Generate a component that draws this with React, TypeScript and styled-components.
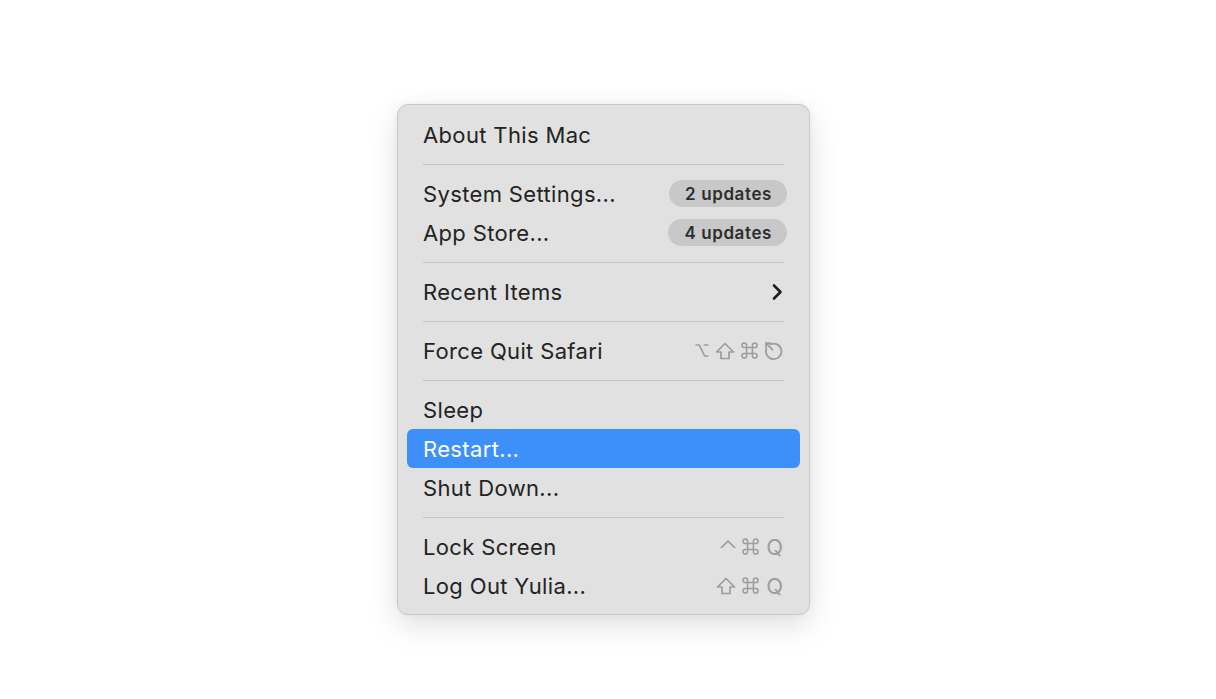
import React from 'react';
import styled, { createGlobalStyle } from 'styled-components';

const GlobalStyle = createGlobalStyle`
  html, body {
    margin: 0;
    padding: 0;
    background: #ffffff;
  }
  body {
    font-family: Inter, "Noto Sans", "Liberation Sans", sans-serif;
    -webkit-font-smoothing: antialiased;
  }
`;

const KEY_GRAY = '#9d9d9d';

const StyledPage = styled.div`
  width: 1216px;
  height: 699px;
  display: flex;
  align-items: flex-start;
  justify-content: flex-start;
  padding: 104px 0 0 397px;
  box-sizing: border-box;
`;

const StyledMenu = styled.div`
  width: 413px;
  box-sizing: border-box;
  padding: 10px 9px 9px 9px;
  background: #e1e1e1;
  border: 1px solid #c9c9c9;
  border-radius: 11px;
  box-shadow: 0 10px 30px rgba(0, 0, 0, 0.13), 0 0 6px rgba(0, 0, 0, 0.05);
  display: flex;
  flex-direction: column;
`;

const StyledRow = styled.div<{ $active?: boolean }>`
  height: 39px;
  display: flex;
  align-items: center;
  justify-content: space-between;
  padding: 0 17px 0 16px;
  border-radius: 6px;
  background: ${(p) => (p.$active ? '#3d8ffa' : 'transparent')};
  color: ${(p) => (p.$active ? '#ffffff' : '#232323')};
`;

const StyledLabel = styled.span`
  font-size: 22px;
  letter-spacing: 0.35px;
`;

const StyledSeparator = styled.div`
  height: 20px;
  display: flex;
  align-items: center;
  padding: 0 16px;

  &::after {
    content: '';
    flex: 1;
    height: 1px;
    background: #c5c5c5;
  }
`;

const StyledBadge = styled.span`
  height: 27px;
  display: flex;
  align-items: center;
  padding: 0 15px 0 16px;
  margin-right: -4px;
  border-radius: 14px;
  background: #c8c8c8;
  color: #2e2e2e;
  font-size: 17px;
  font-weight: 600;
  letter-spacing: 0.6px;
`;

const StyledKeys = styled.span`
  display: flex;
  align-items: center;
  gap: 6px;
  color: ${KEY_GRAY};
`;

const StyledLetter = styled.span`
  font-size: 22px;
  line-height: 1;
  margin-left: 1px;
`;

function OptionKey(): JSX.Element {
  return (
    <svg width="14" height="15" viewBox="0 0 14 15" fill="none" stroke={KEY_GRAY} strokeWidth="1.7">
      <path d="M0.5 2 H4.3 L9.6 13 H13.5 M8.6 2 H13.5" strokeLinejoin="round" />
    </svg>
  );
}

function ShiftKey(): JSX.Element {
  return (
    <svg width="20" height="18" viewBox="0 0 20 18" fill="none" stroke={KEY_GRAY} strokeWidth="1.7">
      <path d="M10 1.5 L18.5 10 H14 V16.5 H6 V10 H1.5 Z" strokeLinejoin="round" />
    </svg>
  );
}

function CommandKey(): JSX.Element {
  return (
    <svg width="17" height="17" viewBox="1.2 1.2 14.6 14.6" fill="none" stroke={KEY_GRAY} strokeWidth="1.3">
      <path d="M6 6 H4 A2 2 0 1 1 6 4 V13 A2 2 0 1 1 4 11 H13 A2 2 0 1 1 11 13 V4 A2 2 0 1 1 13 6 Z" />
    </svg>
  );
}

function ControlKey(): JSX.Element {
  return (
    <svg width="16" height="17" viewBox="0 0 16 17" fill="none" stroke={KEY_GRAY} strokeWidth="1.7">
      <path d="M1 10 L8 3 L15 10" strokeLinejoin="round" />
    </svg>
  );
}

function EscapeKey(): JSX.Element {
  return (
    <svg width="19" height="20" viewBox="0 0 19 20" fill="none" stroke={KEY_GRAY} strokeWidth="1.7">
      <path d="M6.2 3.4 A7.8 7.8 0 1 1 2.4 7.6" strokeLinecap="round" />
      <path d="M2 2.2 L8.6 8.8" strokeLinecap="round" />
      <path d="M2 2.2 V6.6 M2 2.2 H6.4" strokeLinecap="round" />
    </svg>
  );
}

function Chevron(): JSX.Element {
  return (
    <svg width="12" height="18" viewBox="0 0 12 18" fill="none" stroke="#1e1e1e" strokeWidth="2.6">
      <path d="M3 2.5 L9.5 9 L3 15.5" strokeLinecap="round" strokeLinejoin="round" />
    </svg>
  );
}

function App(): JSX.Element {
  return (
    <>
      <GlobalStyle />
      <StyledPage>
        <StyledMenu>
          <StyledRow>
            <StyledLabel>About This Mac</StyledLabel>
          </StyledRow>
          <StyledSeparator />
          <StyledRow>
            <StyledLabel>System Settings...</StyledLabel>
            <StyledBadge>2 updates</StyledBadge>
          </StyledRow>
          <StyledRow>
            <StyledLabel>App Store...</StyledLabel>
            <StyledBadge>4 updates</StyledBadge>
          </StyledRow>
          <StyledSeparator />
          <StyledRow>
            <StyledLabel>Recent Items</StyledLabel>
            <Chevron />
          </StyledRow>
          <StyledSeparator />
          <StyledRow>
            <StyledLabel>Force Quit Safari</StyledLabel>
            <StyledKeys>
              <OptionKey />
              <ShiftKey />
              <CommandKey />
              <EscapeKey />
            </StyledKeys>
          </StyledRow>
          <StyledSeparator />
          <StyledRow>
            <StyledLabel>Sleep</StyledLabel>
          </StyledRow>
          <StyledRow $active>
            <StyledLabel>Restart...</StyledLabel>
          </StyledRow>
          <StyledRow>
            <StyledLabel>Shut Down...</StyledLabel>
          </StyledRow>
          <StyledSeparator />
          <StyledRow>
            <StyledLabel>Lock Screen</StyledLabel>
            <StyledKeys>
              <ControlKey />
              <CommandKey />
              <StyledLetter>Q</StyledLetter>
            </StyledKeys>
          </StyledRow>
          <StyledRow>
            <StyledLabel>Log Out Yulia...</StyledLabel>
            <StyledKeys>
              <ShiftKey />
              <CommandKey />
              <StyledLetter>Q</StyledLetter>
            </StyledKeys>
          </StyledRow>
        </StyledMenu>
      </StyledPage>
    </>
  );
}

export default App;
